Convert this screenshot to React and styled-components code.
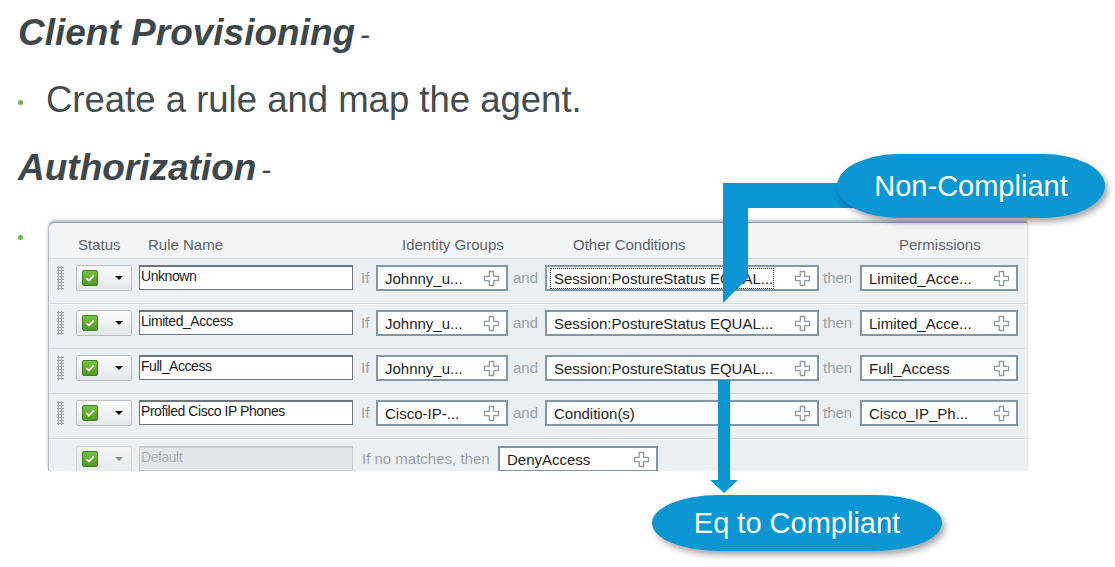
import React from "react";
import styled, { createGlobalStyle } from "styled-components";

const Global = createGlobalStyle`
  html, body { margin: 0; padding: 0; background: #ffffff; }
  body { font-family: "Liberation Sans", Arial, sans-serif; }
`;

const BLUE = "#0a95d3";

const Page = styled.div`
  position: relative;
  width: 1115px;
  height: 567px;
  overflow: hidden;
  box-sizing: border-box;
  padding: 12px 0 0 18px;
  color: #3e484a;
`;

const Heading = styled.div`
  font-size: 37px;
  line-height: 41px;
  margin-top: ${(p) => p.$mt || 0}px;
  white-space: nowrap;
`;

const Strong = styled.span`
  font-weight: bold;
  font-style: italic;
`;

const Dash = styled.span`
  font-size: 30px;
  margin-left: 5px;
`;

const BulletItem = styled.div`
  display: flex;
  align-items: flex-start;
  margin-top: ${(p) => p.$mt || 0}px;
`;

const Dot = styled.span`
  flex: none;
  width: 5px;
  height: 5px;
  border-radius: 50%;
  background: #6db33f;
  margin-top: ${(p) => p.$top}px;
  margin-right: ${(p) => p.$mr}px;
`;

const BulletText = styled.div`
  font-size: 36.5px;
  line-height: 41px;
  color: #434c4e;
  white-space: nowrap;
`;

const Panel = styled.div`
  width: 979px;
  height: 249px;
  box-sizing: border-box;
  background: #ecf0f3;
  border-top: 1px solid #8ea3b5;
  border-left: 1px solid #b3bcc4;
  border-top-left-radius: 7px;
  box-shadow: 0 -2px 3px rgba(40, 60, 80, 0.35);
  overflow: hidden;
  font-family: "Liberation Sans", Arial, sans-serif;
`;

const HeaderRow = styled.div`
  display: flex;
  height: 35px;
  box-sizing: border-box;
  padding: 12px 0 0 29px;
  background: #f2f4f6;
  font-size: 15px;
  line-height: 20px;
  color: #5d6368;
`;

const HeadCell = styled.div`
  width: ${(p) => (p.$w ? `${p.$w}px` : "auto")};
  flex: none;
  white-space: nowrap;
`;

const Row = styled.div`
  display: flex;
  align-items: flex-start;
  height: ${(p) => p.$h || 45}px;
  box-sizing: border-box;
  padding: ${(p) => p.$pt || 6}px 0 0 8px;
  border-top: 1px solid #d2d8dd;
  box-shadow: inset 0 1px 0 #f8fafb;
`;

const Grip = styled.span`
  flex: none;
  width: 7px;
  height: 24px;
  margin-right: 12px;
  margin-top: 1px;
  visibility: ${(p) => (p.$hidden ? "hidden" : "visible")};
  background-image: radial-gradient(circle at 1.5px 1.5px, #9ba4ab 1px, transparent 1.4px);
  background-size: 3px 3px;
`;

const StatusBtn = styled.div`
  flex: none;
  width: 56px;
  height: 26px;
  box-sizing: border-box;
  margin-right: 7px;
  display: flex;
  align-items: center;
  justify-content: space-between;
  padding: 0 8px 0 5px;
  border: 1px solid ${(p) => (p.$disabled ? "#d3d8dc" : "#b7bfc6")};
  border-radius: 2px;
  background: ${(p) =>
    p.$disabled
      ? "linear-gradient(#f3f5f6, #e9ecee)"
      : "linear-gradient(#fbfbfb, #e4e8eb)"};
`;

const Check = styled.span`
  width: 16px;
  height: 16px;
  box-sizing: border-box;
  border: 1px solid #3e7f1c;
  border-radius: 2px;
  background: linear-gradient(#74c23f, #4c9c24);
  display: flex;
  align-items: center;
  justify-content: center;
`;

const Caret = styled.span`
  width: 0;
  height: 0;
  border-left: 4px solid transparent;
  border-right: 4px solid transparent;
  border-top: 4px solid ${(p) => (p.$disabled ? "#8a8f94" : "#111")};
`;

const NameInput = styled.div`
  flex: none;
  width: 214px;
  height: 25px;
  box-sizing: border-box;
  border: 1px solid ${(p) => (p.$disabled ? "#c8cdd1" : "#6f7478")};
  border-top-width: 2px;
  background: ${(p) => (p.$disabled ? "#e3e6e8" : "#ffffff")};
  color: ${(p) => (p.$disabled ? "#aeb3b7" : "#1c1c1c")};
  font-size: 14px;
  line-height: 18px;
  padding: 0 1px;
  letter-spacing: -0.45px;
  white-space: nowrap;
  overflow: hidden;
`;

const Conj = styled.span`
  flex: none;
  width: ${(p) => p.$w}px;
  box-sizing: border-box;
  padding-left: ${(p) => p.$pl}px;
  font-size: 15px;
  line-height: 25px;
  color: #9ba1a6;
  white-space: nowrap;
`;

const PickBox = styled.div`
  flex: none;
  width: ${(p) => p.$w}px;
  height: 26px;
  box-sizing: border-box;
  border: 2px solid #8196a6;
  background: #ffffff;
  display: flex;
  align-items: center;
  justify-content: space-between;
  padding: 0 6px 0 6px;
  font-size: 15px;
  color: #1e1e1e;
  white-space: nowrap;
`;

const PickText = styled.span`
  padding: 0 1px;
  line-height: 19px;
  outline: ${(p) => (p.$focus ? "1px dotted #333" : "none")};
  outline-offset: 0;
  ${(p) => (p.$focus ? "width: 218px; margin-left: -2px; padding-left: 3px;" : "")}
`;

const Overlay = styled.svg`
  position: absolute;
  left: 0;
  top: 0;
  pointer-events: none;
`;

const Pill = styled.div`
  position: absolute;
  left: ${(p) => p.$x}px;
  top: ${(p) => p.$y}px;
  width: ${(p) => p.$w}px;
  height: ${(p) => p.$h}px;
  border-radius: ${(p) => p.$rx}px / ${(p) => p.$ry}px;
  background: ${BLUE};
  box-shadow: 3px 4px 6px rgba(0, 0, 0, 0.35);
  color: #ffffff;
  font-size: 29px;
  display: flex;
  align-items: center;
  justify-content: center;
  white-space: nowrap;
`;

const PlusIcon = () => (
  <svg width="17" height="17" viewBox="0 0 17 17">
    <path
      d="M6.3 1.5 H10.7 V6.3 H15.5 V10.7 H10.7 V15.5 H6.3 V10.7 H1.5 V6.3 H6.3 Z"
      fill="#ffffff"
      stroke="#8e9ba5"
      strokeWidth="1.3"
      strokeLinejoin="round"
    />
  </svg>
);

const CheckMark = () => (
  <svg width="12" height="12" viewBox="0 0 12 12">
    <path d="M2.3 6.2 L4.9 8.6 L9.8 3.4" fill="none" stroke="#ffffff" strokeWidth="1.8" />
  </svg>
);

const Status = ({ disabled }) => (
  <StatusBtn $disabled={disabled}>
    <Check>
      <CheckMark />
    </Check>
    <Caret $disabled={disabled} />
  </StatusBtn>
);

const Pick = ({ w, children, focus }) => (
  <PickBox $w={w}>
    <PickText $focus={focus}>{children}</PickText>
    <PlusIcon />
  </PickBox>
);

const rules = [
  { name: "Unknown", id: "Johnny_u...", cond: "Session:PostureStatus EQUAL...", perm: "Limited_Acce...", focus: true },
  { name: "Limited_Access", id: "Johnny_u...", cond: "Session:PostureStatus EQUAL...", perm: "Limited_Acce..." },
  { name: "Full_Access", id: "Johnny_u...", cond: "Session:PostureStatus EQUAL...", perm: "Full_Access" },
  { name: "Profiled Cisco IP Phones", id: "Cisco-IP-...", cond: "Condition(s)", perm: "Cisco_IP_Ph..." },
];

export default function App() {
  return (
    <>
      <Global />
      <Page>
        <Heading>
          <Strong>Client Provisioning</Strong>
          <Dash>-</Dash>
        </Heading>
        <BulletItem $mt={24}>
          <Dot $top={21} $mr={23} />
          <BulletText>Create a rule and map the agent.</BulletText>
        </BulletItem>
        <Heading $mt={27}>
          <Strong>Authorization</Strong>
          <Dash>-</Dash>
        </Heading>
        <BulletItem $mt={32}>
          <Dot $top={13} $mr={25} />
          <Panel>
            <HeaderRow>
              <HeadCell $w={70}>Status</HeadCell>
              <HeadCell $w={254}>Rule Name</HeadCell>
              <HeadCell $w={171}>Identity Groups</HeadCell>
              <HeadCell $w={326}>Other Conditions</HeadCell>
              <HeadCell>Permissions</HeadCell>
            </HeaderRow>
            {rules.map((r) => (
              <Row key={r.name}>
                <Grip />
                <Status />
                <NameInput>{r.name}</NameInput>
                <Conj $w={23} $pl={8}>If</Conj>
                <Pick w={132}>{r.id}</Pick>
                <Conj $w={37} $pl={5}>and</Conj>
                <Pick w={274} focus={r.focus}>{r.cond}</Pick>
                <Conj $w={41} $pl={4}>then</Conj>
                <Pick w={158}>{r.perm}</Pick>
              </Row>
            ))}
            <Row $h={40} $pt={7}>
              <Grip $hidden />
              <Status disabled />
              <NameInput $disabled>Default</NameInput>
              <Conj $w={145} $pl={9}>If no matches, then</Conj>
              <Pick w={160}>DenyAccess</Pick>
            </Row>
          </Panel>
        </BulletItem>

        <Overlay width="1115" height="567" viewBox="0 0 1115 567">
          <path d="M723 183 L860 183 L860 208 L748 208 L748 278 L723 303 Z" fill={BLUE} />
          <path d="M718 380 L730 380 L730 480 L738 480 L724 493 L710 480 L718 480 Z" fill={BLUE} />
        </Overlay>
        <Pill $x={837} $y={154} $w={268} $h={64} $rx={62} $ry={32}>Non-Compliant</Pill>
        <Pill $x={652} $y={495} $w={290} $h={56} $rx={66} $ry={28}>Eq to Compliant</Pill>
      </Page>
    </>
  );
}
